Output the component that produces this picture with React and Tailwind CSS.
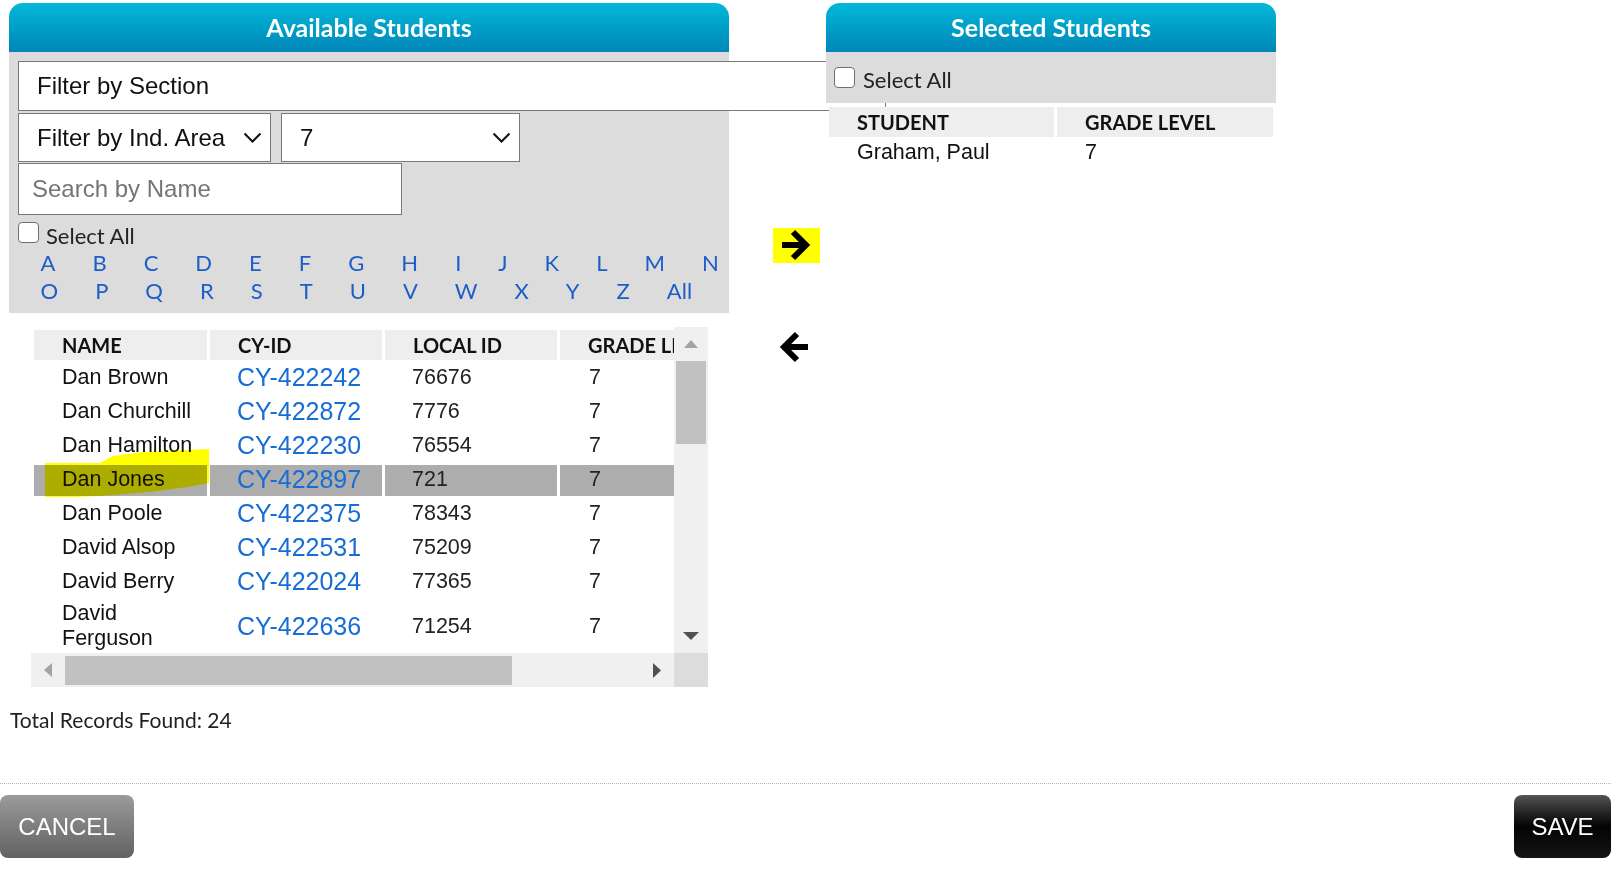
import React from "react";

const ARIAL = "font-['Liberation_Sans',Arial,sans-serif]";
const SEGOE = "font-['Lato','Open_Sans',sans-serif]";

const students = [
  { name: "Dan Brown", cy: "CY-422242", local: "76676", grade: "7" },
  { name: "Dan Churchill", cy: "CY-422872", local: "7776", grade: "7" },
  { name: "Dan Hamilton", cy: "CY-422230", local: "76554", grade: "7" },
  { name: "Dan Jones", cy: "CY-422897", local: "721", grade: "7", active: true },
  { name: "Dan Poole", cy: "CY-422375", local: "78343", grade: "7" },
  { name: "David Alsop", cy: "CY-422531", local: "75209", grade: "7" },
  { name: "David Berry", cy: "CY-422024", local: "77365", grade: "7" },
  { name: "David Ferguson", cy: "CY-422636", local: "71254", grade: "7" },
];

const rowOne = ["A", "B", "C", "D", "E", "F", "G", "H", "I", "J", "K", "L", "M", "N"];
const rowTwo = ["O", "P", "Q", "R", "S", "T", "U", "V", "W", "X", "Y", "Z", "All"];

function Chevron() {
  return (
    <svg width="19" height="11" viewBox="0 0 19 11" className="shrink-0">
      <path d="M1.5 1.5l8 8 8-8" fill="none" stroke="#111" strokeWidth="2" />
    </svg>
  );
}

function FakeSelect({ className, label }) {
  return (
    <div className={`${className} h-[49px] bg-white border border-[#7a7a7a] flex items-center justify-between pl-[18px] pr-[8px] text-[24px] text-[#111] ${ARIAL}`}>
      <span className="whitespace-nowrap">{label}</span>
      <Chevron />
    </div>
  );
}

function Checkbox() {
  return <div className="w-[21px] h-[21px] shrink-0 rounded-[4px] border-[1.5px] border-[#6f6f6f] bg-white" />;
}

function PanelHeader({ children }) {
  return (
    <div className="h-[49px] rounded-t-[14px] bg-linear-to-b from-[#04b8d8] to-[#0086b8] flex items-center justify-center">
      <h2 className={`${SEGOE} text-[25px] font-bold text-white`}>{children}</h2>
    </div>
  );
}

function BigArrow({ left }) {
  return (
    <svg width="30" height="34" viewBox="0 0 30 34" className="block blur-[0.5px]">
      {left ? (
        <path d="M29 17H6M18 4L5 17l13 13" fill="none" stroke="#000" strokeWidth="6" />
      ) : (
        <path d="M1 17H24M12 4l13 13-13 13" fill="none" stroke="#000" strokeWidth="6" />
      )}
    </svg>
  );
}

function StudentTable() {
  return (
    <div className="w-[677px] h-[360px] flex flex-col">
      <div className="flex h-[326px]">
        <div className="relative w-[643px] overflow-hidden bg-white">
          <table className="table-fixed border-separate border-spacing-[3px] w-[704px]">
            <colgroup>
              <col className="w-[173px]" />
              <col className="w-[172px]" />
              <col className="w-[172px]" />
              <col className="w-[172px]" />
            </colgroup>
            <thead>
              <tr className={`${SEGOE} text-[20px] font-bold text-[#111]`}>
                <th className="h-[28px] bg-[#eeeeee] text-left pl-[28px] whitespace-nowrap">NAME</th>
                <th className="h-[28px] bg-[#eeeeee] text-left pl-[28px] whitespace-nowrap">CY-ID</th>
                <th className="h-[28px] bg-[#eeeeee] text-left pl-[28px] whitespace-nowrap">LOCAL ID</th>
                <th className="h-[28px] bg-[#eeeeee] text-left pl-[28px] whitespace-nowrap">GRADE LEVEL</th>
              </tr>
            </thead>
            <tbody className={`${ARIAL} text-[21.5px] leading-[25px] text-[#111]`}>
              {students.map((s) => (
                <tr key={s.cy} className={s.active ? "bg-[#adadad]" : ""}>
                  <td className="h-[31px] pl-[28px] pr-[4px] pb-[2px] align-middle">{s.name}</td>
                  <td className="h-[31px] pl-[27px] pb-[2px] align-middle">
                    <a className="block text-[25px] leading-[27px] text-[#176dd4]">{s.cy}</a>
                  </td>
                  <td className="h-[31px] pl-[27px] pb-[2px] align-middle text-[#222]">{s.local}</td>
                  <td className="h-[31px] pl-[29px] pb-[2px] align-middle text-[#222]">{s.grade}</td>
                </tr>
              ))}
            </tbody>
          </table>
          {/* highlighter mark */}
          <svg width="200" height="60" viewBox="0 0 200 60" className="absolute left-0 top-[110px] mix-blend-multiply pointer-events-none">
            <polygon
              points="14,26 69,26 82,19 112,15 178,12 178,46 156,50 119,55 69,59 14,61"
              fill="#ffff00"
            />
          </svg>
        </div>
        <div className="w-[34px] bg-[#f0f0f0] flex flex-col">
          <div className="h-[34px] flex items-center justify-center">
            <svg width="14" height="8" viewBox="0 0 14 8"><polygon points="0,8 7,0 14,8" fill="#a3a3a3" /></svg>
          </div>
          <div className="mx-[2px] h-[83px] bg-[#c1c1c1]" />
          <div className="flex-1" />
          <div className="h-[34px] flex items-center justify-center">
            <svg width="16" height="8" viewBox="0 0 16 8"><polygon points="0,0 16,0 8,8" fill="#505050" /></svg>
          </div>
        </div>
      </div>
      <div className="flex h-[34px]">
        <div className="w-[643px] bg-[#f0f0f0] flex items-center">
          <div className="w-[34px] h-[34px] flex items-center justify-center">
            <svg width="8" height="14" viewBox="0 0 8 14"><polygon points="8,0 0,7 8,14" fill="#a3a3a3" /></svg>
          </div>
          <div className="w-[447px] h-[29px] bg-[#c1c1c1]" />
          <div className="flex-1" />
          <div className="w-[34px] h-[34px] flex items-center justify-center">
            <svg width="8" height="15" viewBox="0 0 8 15"><polygon points="0,0 8,7.5 0,15" fill="#505050" /></svg>
          </div>
        </div>
        <div className="w-[34px] bg-[#dcdcdc]" />
      </div>
    </div>
  );
}

export default function App() {
  return (
    <div className="w-[1620px] h-[896px] overflow-hidden bg-white text-[#111]">
      <div className="h-[783px] flex items-start pt-[3px]">
        {/* Available Students */}
        <div className="ml-[9px] w-[720px] shrink-0">
          <PanelHeader>Available Students</PanelHeader>
          <div className="h-[261px] bg-[#dcdcdc] pl-[9px] pt-[9px]">
            <div className={`w-[868px] h-[50px] bg-white border border-[#7a7a7a] flex items-center pl-[18px] text-[24px] text-[#111] ${ARIAL}`}>
              Filter by Section
            </div>
            <div className="mt-[2px] flex gap-[10px]">
              <FakeSelect className="w-[253px]" label="Filter by Ind. Area" />
              <FakeSelect className="w-[239px]" label="7" />
            </div>
            <input
              placeholder="Search by Name"
              className={`mt-[1px] block w-[384px] h-[52px] border border-[#7a7a7a] bg-white pl-[13px] text-[24px] placeholder:text-[#757575] outline-none ${ARIAL}`}
            />
            <div className="mt-[7px] flex items-start gap-[7px]">
              <Checkbox />
              <span className={`${SEGOE} mt-[1px] text-[22px] leading-[26px] text-[#222]`}>Select All</span>
            </div>
            <div className={`${SEGOE} ml-[4px] text-[22px] leading-[28px] text-[#1c5dc9]`}>
              <div className="flex">
                {rowOne.map((l) => (
                  <a key={l} className="px-[18.5px]">{l}</a>
                ))}
              </div>
              <div className="flex">
                {rowTwo.map((l) => (
                  <a key={l} className="px-[18.5px]">{l}</a>
                ))}
              </div>
            </div>
          </div>
          <div className="mt-[14px] ml-[22px]">
            <StudentTable />
          </div>
          <p className={`${SEGOE} mt-[18px] ml-[1px] text-[21px] leading-[30px] text-[#222]`}>Total Records Found: 24</p>
        </div>

        {/* Move arrows */}
        <div className="w-[97px] shrink-0 pl-[44px] pt-[227px]">
          <div className="w-[47px] h-[35px] bg-[#ffff00] pl-[8px]">
            <div className="-mt-[2px]">
              <BigArrow />
            </div>
          </div>
          <div className="mt-[67px] pl-[6px]">
            <BigArrow left />
          </div>
        </div>

        {/* Selected Students */}
        <div className="relative z-10 w-[450px] shrink-0">
          <PanelHeader>Selected Students</PanelHeader>
          <div className="h-[51px] bg-[#dcdcdc] pl-[8px] flex items-center gap-[8px]">
            <Checkbox />
            <span className={`${SEGOE} text-[22px] leading-[26px] text-[#222] mt-[4px]`}>Select All</span>
          </div>
          <table className="mt-[1px] w-[450px] table-fixed border-separate border-spacing-[3px]">
            <colgroup>
              <col className="w-[225px]" />
              <col className="w-[216px]" />
            </colgroup>
            <thead>
              <tr className={`${SEGOE} text-[20px] font-bold text-[#111]`}>
                <th className="h-[28px] bg-[#eeeeee] text-left pl-[28px]">STUDENT</th>
                <th className="h-[28px] bg-[#eeeeee] text-left pl-[28px]">GRADE LEVEL</th>
              </tr>
            </thead>
            <tbody className={`${ARIAL} text-[21.5px] leading-[24px] text-[#111]`}>
              <tr>
                <td className="h-[28px] pl-[28px] pb-[8px]">Graham, Paul</td>
                <td className="h-[28px] pl-[28px] pb-[8px]">7</td>
              </tr>
            </tbody>
          </table>
        </div>
      </div>

      <div className="w-[1611px] border-t border-dotted border-[#b4b4b4]" />

      <div className="mt-[11px] flex justify-between pr-[9px]">
        <button className={`${ARIAL} w-[134px] h-[63px] rounded-[8px] bg-linear-to-b from-[#9b9b9b] to-[#626262] text-white text-[24px]`}>
          CANCEL
        </button>
        <button className={`${ARIAL} w-[97px] h-[63px] rounded-[8px] bg-linear-to-b from-[#555555] via-[#050505] to-[#151515] text-white text-[24px]`}>
          SAVE
        </button>
      </div>
    </div>
  );
}
